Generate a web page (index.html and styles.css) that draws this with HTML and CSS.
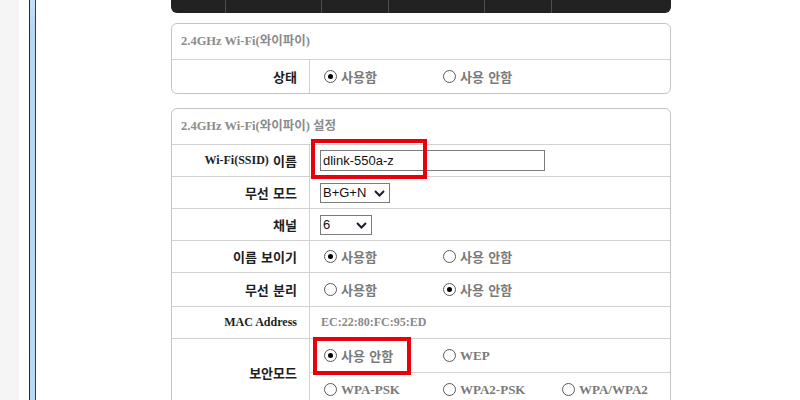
FILE: index.html
```html
<!DOCTYPE html>
<html>
<head>
    <title>2.4GHz Wi-Fi 설정</title>
    <link rel="stylesheet" href="styles.css">
</head>
<body>
    <div class="page">
        <div class="side"></div>
        <div class="rail"></div>

        <div class="main">
            <div class="content">
                <div class="nav">
                    <span style="width:55px"></span>
                    <span style="width:96px"></span>
                    <span style="width:67px"></span>
                    <span style="width:96px"></span>
                    <span style="width:67px"></span>
                    <span class="last"></span>
                </div>

                <div class="panel">
                    <div class="panel-title">2.4GHz Wi-Fi(와이파이)</div>
                    <div class="row tall">
                        <div class="label">상태</div>
                        <div class="value">
                            <label class="opt"><input type="radio" class="radio" name="status" checked>사용함</label>
                            <label class="opt"><input type="radio" class="radio" name="status">사용 안함</label>
                        </div>
                    </div>
                </div>

                <div class="panel second">
                    <div class="panel-title">2.4GHz Wi-Fi(와이파이) 설정</div>

                    <div class="row">
                        <div class="label"><span class="en">Wi-Fi(SSID)</span>&nbsp;이름</div>
                        <div class="value">
                            <input type="text" class="ssid" value="dlink-550a-z">
                            <div class="mark mark-ssid"></div>
                        </div>
                    </div>

                    <div class="row">
                        <div class="label">무선 모드</div>
                        <div class="value">
                            <span class="sel mode">
                                <select><option>B+G+N</option></select>
                                <svg width="11" height="7" viewBox="0 0 11 7"><path d="M1 1 L5.5 5.5 L10 1" fill="none" stroke="#1b1b2b" stroke-width="2"/></svg>
                            </span>
                        </div>
                    </div>

                    <div class="row">
                        <div class="label">채널</div>
                        <div class="value">
                            <span class="sel channel">
                                <select><option>6</option></select>
                                <svg width="11" height="7" viewBox="0 0 11 7"><path d="M1 1 L5.5 5.5 L10 1" fill="none" stroke="#1b1b2b" stroke-width="2"/></svg>
                            </span>
                        </div>
                    </div>

                    <div class="row">
                        <div class="label">이름 보이기</div>
                        <div class="value">
                            <label class="opt"><input type="radio" class="radio" name="bcast" checked>사용함</label>
                            <label class="opt"><input type="radio" class="radio" name="bcast">사용 안함</label>
                        </div>
                    </div>

                    <div class="row">
                        <div class="label">무선 분리</div>
                        <div class="value">
                            <label class="opt"><input type="radio" class="radio" name="iso">사용함</label>
                            <label class="opt"><input type="radio" class="radio" name="iso" checked>사용 안함</label>
                        </div>
                    </div>

                    <div class="row">
                        <div class="label en">MAC Address</div>
                        <div class="value mac">EC:22:80:FC:95:ED</div>
                    </div>

                    <div class="row">
                        <div class="label">보안모드</div>
                        <div class="value stack">
                            <div class="sub">
                                <label class="opt"><input type="radio" class="radio" name="sec" checked>사용 안함</label>
                                <label class="opt en"><input type="radio" class="radio" name="sec">WEP</label>
                                <div class="mark mark-sec"></div>
                            </div>
                            <div class="sub">
                                <label class="opt en"><input type="radio" class="radio" name="sec">WPA-PSK</label>
                                <label class="opt en"><input type="radio" class="radio" name="sec">WPA2-PSK</label>
                                <label class="opt en"><input type="radio" class="radio" name="sec">WPA/WPA2</label>
                            </div>
                        </div>
                    </div>
                </div>
            </div>
        </div>
    </div>
</body>
</html>
```

FILE: styles.css
```css
body {
    margin: 0;
    background: #fff;
    font-family: "Liberation Serif", "Noto Sans CJK KR", serif;
    font-size: 12px;
    font-weight: bold;
    color: #222;
}
.page {
    display: flex;
    height: 400px;
    overflow: hidden;
}
.side {
    width: 19px;
    margin-right: 10px;
    background: #f5f5f5;
}
.rail {
    width: 5px;
    border-left: 1px solid #2b2b2b;
    border-right: 1px solid #3c3c3c;
    background: linear-gradient(to bottom, #c6e0fa 0, #b7d6f6 30px, #b9d8f8 100%);
}
.main {
    flex: 1;
    padding-left: 135px;
}
.content {
    width: 500px;
}

/* top menu (only its bottom edge is visible) */
.nav {
    display: flex;
    height: 13px;
    background: #222;
    border-radius: 0 0 6px 6px;
    overflow: hidden;
}
.nav span {
    border-right: 1px solid #4e4e4e;
    box-sizing: border-box;
}
.nav .last {
    flex: 1;
    border-right: none;
}

/* panels */
.panel {
    margin-top: 10px;
    border: 1px solid #c4c4c4;
    border-radius: 6px;
}
.panel.second {
    margin-top: 14px;
}
.panel-title {
    height: 35px;
    line-height: 35px;
    padding-left: 9px;
    color: #8c8c8c;
    font-size: 12.5px;
    border-bottom: 1px solid #d2d2d2;
}
.row {
    display: grid;
    grid-template-columns: 138px minmax(0, 1fr);
    min-height: 31px;
    border-bottom: 1px solid #d2d2d2;
}
.row:last-child {
    border-bottom: none;
}
.row.tall {
    min-height: 33px;
}
.row:nth-child(6) {
    min-height: 33px;
}
.label {
    display: flex;
    align-items: center;
    justify-content: flex-end;
    padding-right: 12px;
    border-right: 1px solid #d2d2d2;
    color: #1e1e1e;
    font-size: 13px;
    word-spacing: 1px;
}
.en,
.label.en {
    font-size: 12px;
    word-spacing: 0;
}
.value {
    position: relative;
    display: flex;
    align-items: center;
    padding-left: 10px;
    color: #7a7a7a;
}
.value.mac {
    color: #8a8a8a;
    padding-left: 11px;
}
.value.stack {
    display: block;
    padding-left: 0;
}
.sub {
    position: relative;
    display: flex;
    align-items: center;
    height: 33px;
    padding-left: 10px;
}
.sub + .sub {
    border-top: 1px solid #d2d2d2;
}

/* radios */
.opt {
    display: flex;
    align-items: center;
    width: 119px;
    flex: none;
    white-space: nowrap;
    font-size: 13px;
    word-spacing: 1px;
}
.opt:last-child {
    width: auto;
}
.radio {
    appearance: none;
    -webkit-appearance: none;
    box-sizing: border-box;
    width: 13px;
    height: 13px;
    margin: 0 4px 0 4px;
    border: 1px solid #5a5a5a;
    border-radius: 50%;
    background: #fff;
    display: grid;
    place-content: center;
}
.radio:checked::before {
    content: "";
    width: 5px;
    height: 5px;
    border-radius: 50%;
    background: #000;
}

/* inputs */
.ssid {
    box-sizing: border-box;
    width: 225px;
    height: 21px;
    margin: 0;
    padding: 0 2px;
    border: 1px solid #7b7b7b;
    font-family: "Liberation Sans", Arial, sans-serif;
    font-size: 13px;
    font-weight: normal;
    color: #111;
}
.sel {
    position: relative;
    display: inline-block;
}
.sel select {
    appearance: none;
    -webkit-appearance: none;
    box-sizing: border-box;
    height: 20px;
    margin: 0;
    padding: 0 0 0 2px;
    border: 1px solid #7b7b7b;
    border-radius: 0;
    background: #fff;
    font-family: "Liberation Sans", Arial, sans-serif;
    font-size: 13px;
    color: #111;
}
.sel.mode select {
    width: 70px;
}
.sel.channel select {
    width: 52px;
}
.sel svg {
    position: absolute;
    right: 5px;
    top: 7px;
    pointer-events: none;
}

/* red annotation boxes */
.mark {
    position: absolute;
    z-index: 2;
    box-sizing: border-box;
    border: 4px solid #e8000b;
    pointer-events: none;
}
.mark-ssid {
    left: 1px;
    top: -6px;
    width: 116px;
    height: 40px;
}
.mark-sec {
    left: 3px;
    top: -2px;
    width: 98px;
    height: 38px;
}
```
